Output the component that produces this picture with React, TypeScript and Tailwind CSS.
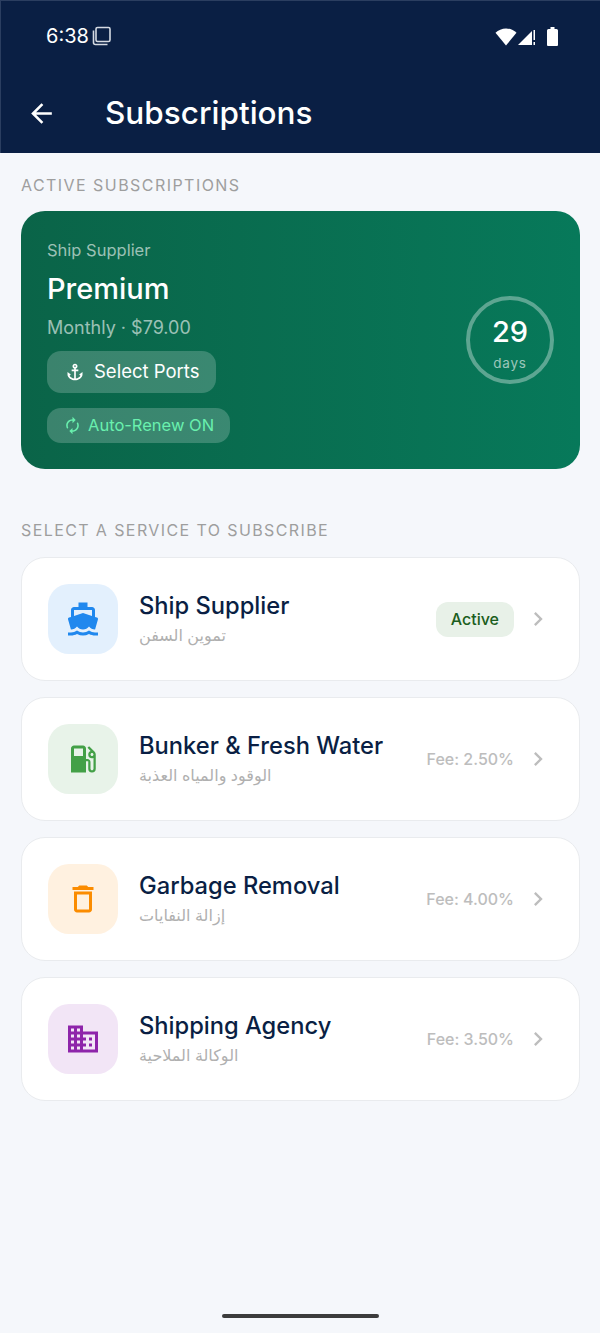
import { MdAnchor, MdArrowBack, MdAutorenew, MdChevronRight, MdDirectionsBoatFilled, MdDomain, MdLocalGasStation, MdOutlineDelete } from "react-icons/md";
import type { IconType } from "react-icons";

const FONT = "[font-family:Inter,'Noto_Sans','DejaVu_Sans',sans-serif]";

interface Service {
  title: string;
  arabic: string;
  fee?: string;
  icon: IconType;
  boxClass: string;
  iconClass: string;
}

const services: Service[] = [
  { title: "Ship Supplier", arabic: "تموين السفن", icon: MdDirectionsBoatFilled, boxClass: "bg-[#e3f0fd]", iconClass: "text-[#2088ee]" },
  { title: "Bunker & Fresh Water", arabic: "الوقود والمياه العذبة", fee: "Fee: 2.50%", icon: MdLocalGasStation, boxClass: "bg-[#e8f3e9]", iconClass: "text-[#43a047]" },
  { title: "Garbage Removal", arabic: "إزالة النفايات", fee: "Fee: 4.00%", icon: MdOutlineDelete, boxClass: "bg-[#fff1e0]", iconClass: "text-[#fb8c00]" },
  { title: "Shipping Agency", arabic: "الوكالة الملاحية", fee: "Fee: 3.50%", icon: MdDomain, boxClass: "bg-[#f2e5f6]", iconClass: "text-[#8e24aa]" },
];

function StatusIcons() {
  return (
    <div className="flex items-center">
      <svg width="22" height="19" viewBox="0 0 22 19" className="mr-[1px]">
        <path d="M0.500 5.800C3.200 3 7 1.400 11 1.400s7.800 1.600 10.500 4.400L11 18.500z" fill="#fff" />
      </svg>
      <svg width="18" height="19" viewBox="0 0 18 19" className="mr-[11px]">
        <path d="M0 18 14 4v14z" fill="#fff" />
        <path d="M15.500 3h1.500v10h-1.500zM15.500 15h1.500v3h-1.500z" fill="#fff" />
      </svg>
      <svg width="11" height="19" viewBox="0 0 11 19">
        <path d="M3.500 0h4v2h2a1.500 1.500 0 0 1 1.500 1.500V18a1 1 0 0 1-1 1H1a1 1 0 0 1-1-1V3.500A1.500 1.500 0 0 1 1.500 2h2z" fill="#fff" />
      </svg>
    </div>
  );
}

function ServiceRow({ service }: { service: Service }) {
  const Icon = service.icon;
  return (
    <div className="flex h-[124px] items-center rounded-[24px] border border-[#e9ebee] bg-white pl-[26px] pr-[32px]">
      <div className={`flex h-[70px] w-[70px] shrink-0 items-center justify-center rounded-[21px] ${service.boxClass}`}>
        <Icon size={36} className={service.iconClass} />
      </div>
      <div className="ml-[21px] min-w-0 flex-1">
        <p className="text-[23.700px] font-medium leading-[30px] text-[#0a1f44]">{service.title}</p>
        <p className="mt-[2px] text-[16px] leading-[24px] text-[#b0b0b0]">{service.arabic}</p>
      </div>
      {service.fee ? (
        <span className="mr-[1px] text-[16px] font-medium text-[#bdbdbd]">{service.fee}</span>
      ) : (
        <span className="mr-[1px] rounded-[12px] bg-[#e8f1e8] px-[15px] py-[6px] text-[16px] font-medium leading-[23px] text-[#1b5e20]">Active</span>
      )}
      <MdChevronRight size={28} className="ml-[9px] mr-[-5px] text-[#bdbdbd]" />
    </div>
  );
}

export default function App() {
  return (
    <div className={`flex h-[1333px] w-[600px] flex-col overflow-hidden bg-[#f5f7fb] ${FONT}`}>
      <header className="h-[153px] shrink-0 border-t border-l border-[#2b3e60] bg-[#0a1f44] text-white">
        <div className="flex h-[70px] items-center justify-between pl-[45px] pr-[42px]">
          <div className="flex items-center">
            <span className="text-[20px] leading-none">6:38</span>
            <svg width="20" height="20" viewBox="0 0 20 20" className="ml-[3px]" fill="none" stroke="#d5dae3" strokeWidth="1.600">
              <rect x="4" y="1.500" width="14" height="14" rx="1.500" />
              <path d="M1.500 4.500v12a2 2 0 0 0 2 2h12" />
            </svg>
          </div>
          <StatusIcons />
        </div>
        <div className="flex h-[84px] items-center pl-[25px]">
          <MdArrowBack size={31} />
          <h1 className="ml-[48px] text-[31.500px] font-medium leading-none">Subscriptions</h1>
        </div>
      </header>

      <main className="flex flex-1 flex-col pl-[21px] pr-[20px]">
        <h2 className="mt-[22px] text-[16px] font-normal leading-[20px] tracking-[1.450px] text-[#9e9e9e]">ACTIVE SUBSCRIPTIONS</h2>

        <section className="mt-[16px] flex h-[258px] items-center rounded-[24px] bg-gradient-to-r from-[#0a6448] to-[#07795a] pl-[26px] pr-[26px]">
          <div className="flex-1">
            <p className="text-[16.500px] leading-[24px] text-white/60">Ship Supplier</p>
            <p className="mt-[8px] text-[29px] font-medium leading-[38px] text-white">Premium</p>
            <p className="mt-[7px] text-[18px] leading-[26px] text-white/60">Monthly · $79.00</p>
            <div className="mt-[10px] flex h-[42px] w-[169px] items-center rounded-[14px] bg-white/20 pl-[18px]">
              <MdAnchor size={20} className="text-white" />
              <span className="ml-[9px] pt-[1px] text-[18.500px] font-normal text-white">Select Ports</span>
            </div>
            <div className="mt-[15px] flex h-[35px] w-[183px] items-center rounded-[14px] bg-white/20 pl-[16px]">
              <MdAutorenew size={19} className="text-[#69f0ae]" />
              <span className="ml-[6px] text-[16.500px] font-normal text-[#69f0ae]">Auto-Renew ON</span>
            </div>
          </div>
          <div className="flex h-[88px] w-[88px] shrink-0 flex-col items-center justify-center rounded-full border-[4px] border-white/35 pt-[6px]">
            <span className="text-[29px] font-medium leading-[34px] text-white">29</span>
            <span className="mt-[6px] text-[13.500px] leading-[16px] tracking-[0.800px] text-white/60">days</span>
          </div>
        </section>

        <h2 className="mt-[51px] text-[16px] font-normal leading-[20px] tracking-[1.400px] text-[#9e9e9e]">SELECT A SERVICE TO SUBSCRIBE</h2>

        <div className="mt-[17px] flex flex-col gap-[16px]">
          {services.map((service) => (
            <ServiceRow key={service.title} service={service} />
          ))}
        </div>

        <div className="mb-[15px] mt-auto h-[4px] w-[157px] self-center rounded-full bg-[#3c3c3c]" />
      </main>
    </div>
  );
}
